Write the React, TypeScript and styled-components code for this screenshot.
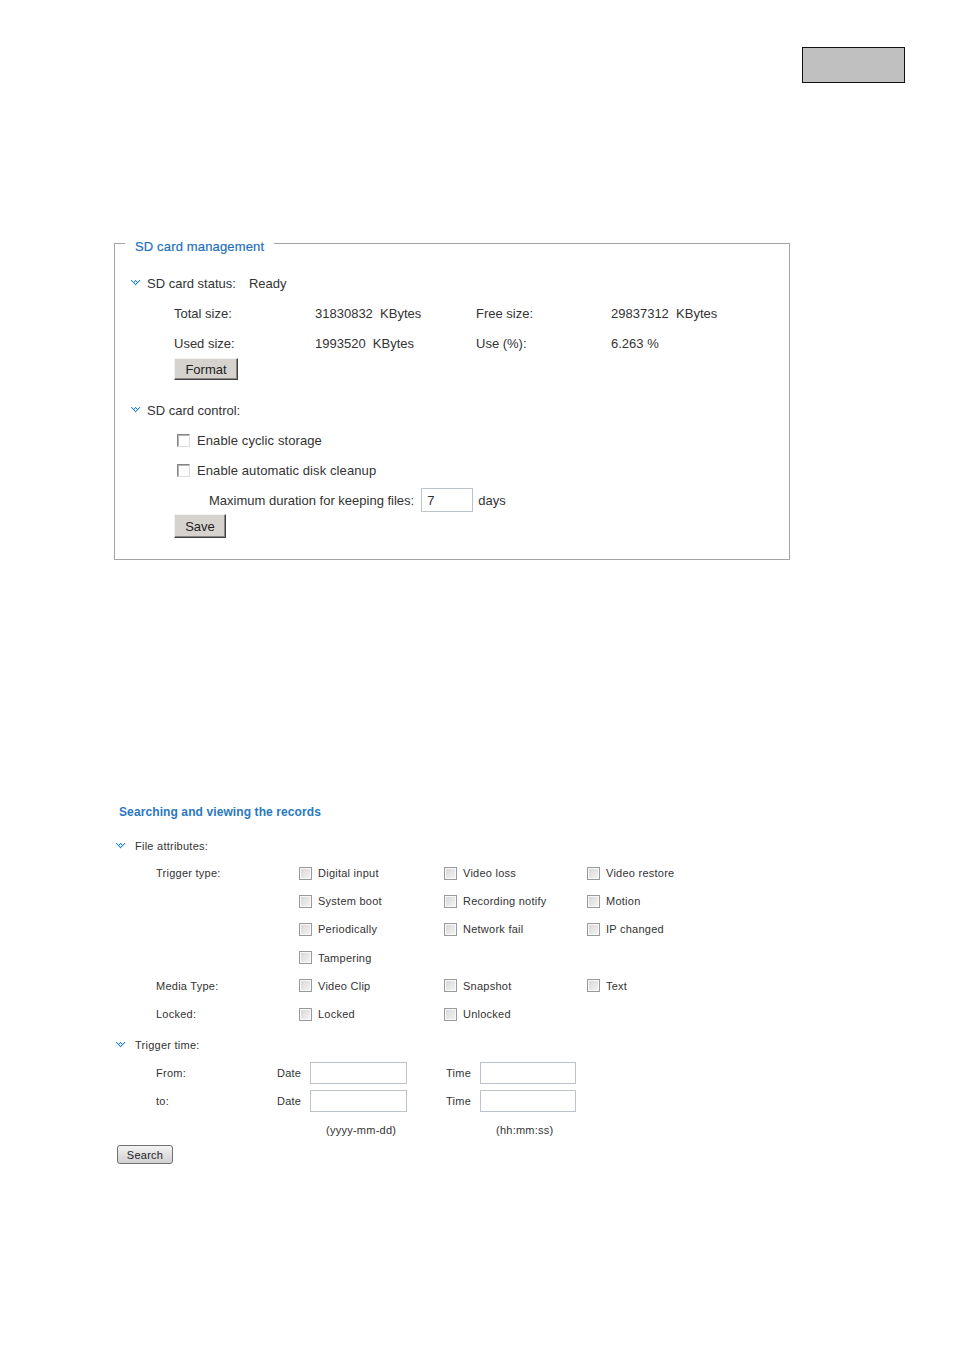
import React from "react";
import styled, { createGlobalStyle } from "styled-components";

const Global = createGlobalStyle`
  html, body { margin: 0; padding: 0; background: #fff; }
  body { font-family: "Liberation Sans", Arial, sans-serif; color: #333; }
  * { box-sizing: border-box; }
`;

const Page = styled.div`
  width: 954px;
  min-height: 1350px;
  background: #fff;
`;

const TopBar = styled.div`
  display: flex;
  justify-content: flex-end;
  padding: 47px 49px 0 0;
`;

const GrayBox = styled.div`
  width: 103px;
  height: 36px;
  background: #c0c0c0;
  border: 1px solid #111;
`;

const Fieldset = styled.fieldset`
  margin: 149px 0 0 114px;
  padding: 0;
  width: 676px;
  min-width: 0;
  border: 1px solid #a4a4a4;
`;

const Legend = styled.legend`
  margin-left: 10px;
  padding: 8px 10px 0 10px;
  font-size: 13px;
  line-height: 14px;
  letter-spacing: 0.15px;
  color: #2470bd;
  -webkit-text-stroke: 0.2px #2470bd;
`;

const Body = styled.div`
  padding: 14px 0 21px 16px;
  font-size: 13px;
`;

const Head = styled.div<{ $h: number; $mt?: number; $gap: number }>`
  display: flex;
  align-items: center;
  height: ${(p) => p.$h}px;
  margin-top: ${(p) => p.$mt ?? 0}px;
  & > svg { margin-right: ${(p) => p.$gap}px; flex: none; }
`;

const StatusVal = styled.span`
  margin-left: 13px;
`;

const Indented = styled.div<{ $pl: number }>`
  padding-left: ${(p) => p.$pl}px;
`;

const InfoRow = styled.div`
  display: grid;
  grid-template-columns: 141px 161px 135px auto;
  align-items: center;
  height: 30px;
`;

const ClassicButton = styled.button<{ $w: number; $h: number }>`
  display: block;
  width: ${(p) => p.$w}px;
  height: ${(p) => p.$h}px;
  padding: 0;
  font-family: "Liberation Sans", Arial, sans-serif;
  font-size: 13px;
  color: #222;
  background: #d6d3ce;
  border-style: solid;
  border-width: 1px;
  border-color: #f4f3f1 #404040 #404040 #f4f3f1;
  box-shadow: inset -1px -1px 0 #888;
`;

const CheckRow = styled.div`
  display: flex;
  align-items: center;
  height: 30px;
  letter-spacing: 0.1px;
`;

const ClassicCheck = styled.span`
  display: inline-block;
  width: 13px;
  height: 13px;
  margin: 0 7px 0 3px;
  background: #fff;
  border-style: solid;
  border-width: 1px;
  border-color: #858585 #dcdcdc #dcdcdc #858585;
  box-shadow: inset 1px 1px 0 #b4b4b4;
`;

const MaxRow = styled.div`
  display: flex;
  align-items: center;
  height: 28px;
  margin-top: 1px;
  padding-left: 35px;
`;

const DaysInput = styled.div`
  width: 52px;
  height: 24px;
  margin: 0 5px 0 7px;
  padding-left: 5px;
  display: flex;
  align-items: center;
  border: 1px solid #bcc3cd;
  background: #fff;
  font-size: 13px;
`;

const Search = styled.div`
  margin: 245px 0 0 116px;
  font-size: 11px;
  letter-spacing: 0.25px;
`;

const Title = styled.div`
  margin-left: 3px;
  font-weight: bold;
  font-size: 12px;
  line-height: 14px;
  letter-spacing: 0.1px;
  color: #2a78c0;
`;

const AttrGrid = styled.div`
  display: grid;
  grid-template-columns: 143px 145px 143px auto;
  grid-auto-rows: 28.2px;
  align-items: center;
  padding-left: 40px;
  margin-top: 3px;
`;

const Opt = styled.label`
  display: flex;
  align-items: center;
`;

const SoftCheck = styled.span`
  display: inline-block;
  width: 13px;
  height: 13px;
  margin-right: 6px;
  border: 1px solid #9a9a9a;
  background: linear-gradient(135deg, #d6d6d6 0%, #ececec 70%, #f6f6f6 100%);
  box-shadow: inset 0 0 0 1px #f8f8f8;
`;

const TimeGrid = styled.div`
  display: grid;
  grid-template-columns: 121px 33px 97px 39px 34px 96px;
  grid-template-rows: 28px 28px 29px;
  align-items: center;
  padding-left: 40px;
  margin-top: 4px;
`;

const TextBox = styled.div`
  height: 22px;
  border: 1px solid #bcc3cd;
  background: #fff;
`;

const Hint = styled.span<{ $col: number }>`
  grid-column: ${(p) => p.$col} / span 1;
  padding-left: 16px;
  white-space: nowrap;
`;

const SearchButton = styled.button`
  display: block;
  margin: 1px 0 0 1px;
  width: 56px;
  height: 19px;
  padding: 0;
  font-family: "Liberation Sans", Arial, sans-serif;
  font-size: 11px;
  letter-spacing: 0.25px;
  color: #222;
  border: 1px solid #707070;
  border-radius: 3px;
  background: linear-gradient(#f4f4f4, #dedede 55%, #d2d2d2);
`;

const dots: [number, number][] = [
  [0, 0], [4, 0], [8, 0],
  [1, 1], [3, 1], [5, 1], [7, 1],
  [2, 2], [6, 2],
  [3, 3], [5, 3],
  [4, 4],
];

const Arrow: React.FC = () => (
  <svg width="10" height="6" viewBox="0 0 10 6" fill="#2f8ad6">
    {dots.map(([x, y], i) => (
      <rect key={i} x={x} y={y} width="1.2" height="1.2" />
    ))}
  </svg>
);

const Option: React.FC<{ label: string }> = ({ label }) => (
  <Opt>
    <SoftCheck />
    {label}
  </Opt>
);

const attrRows: [string, string[]][] = [
  ["Trigger type:", ["Digital input", "Video loss", "Video restore"]],
  ["", ["System boot", "Recording notify", "Motion"]],
  ["", ["Periodically", "Network fail", "IP changed"]],
  ["", ["Tampering"]],
  ["Media Type:", ["Video Clip", "Snapshot", "Text"]],
  ["Locked:", ["Locked", "Unlocked"]],
];

export default function App() {
  return (
    <Page>
      <Global />
      <TopBar>
        <GrayBox />
      </TopBar>

      <Fieldset>
        <Legend>SD card management</Legend>
        <Body>
          <Head $h={30} $gap={6}>
            <Arrow />
            <span>SD card status:</span>
            <StatusVal>Ready</StatusVal>
          </Head>
          <Indented $pl={43}>
            <InfoRow>
              <span>Total size:</span>
              <span>31830832&nbsp; KBytes</span>
              <span>Free size:</span>
              <span>29837312&nbsp; KBytes</span>
            </InfoRow>
            <InfoRow>
              <span>Used size:</span>
              <span>1993520&nbsp; KBytes</span>
              <span>Use (%):</span>
              <span>6.263 %</span>
            </InfoRow>
            <ClassicButton $w={64} $h={22}>Format</ClassicButton>
          </Indented>

          <Head $h={30} $mt={15} $gap={6}>
            <Arrow />
            <span>SD card control:</span>
          </Head>
          <Indented $pl={43}>
            <CheckRow>
              <ClassicCheck />
              Enable cyclic storage
            </CheckRow>
            <CheckRow>
              <ClassicCheck />
              Enable automatic disk cleanup
            </CheckRow>
            <MaxRow>
              Maximum duration for keeping files:
              <DaysInput>7</DaysInput>
              days
            </MaxRow>
            <ClassicButton $w={52} $h={24}>Save</ClassicButton>
          </Indented>
        </Body>
      </Fieldset>

      <Search>
        <Title>Searching and viewing the records</Title>
        <Head $h={20} $mt={17} $gap={9}>
          <Arrow />
          <span>File attributes:</span>
        </Head>
        <AttrGrid>
          {attrRows.map(([label, opts], i) => (
            <React.Fragment key={i}>
              <span>{label}</span>
              {[0, 1, 2].map((j) =>
                opts[j] ? <Option key={j} label={opts[j]} /> : <span key={j} />
              )}
            </React.Fragment>
          ))}
        </AttrGrid>
        <Head $h={20} $mt={7} $gap={9}>
          <Arrow />
          <span>Trigger time:</span>
        </Head>
        <TimeGrid>
          <span>From:</span>
          <span>Date</span>
          <TextBox />
          <span />
          <span>Time</span>
          <TextBox />
          <span>to:</span>
          <span>Date</span>
          <TextBox />
          <span />
          <span>Time</span>
          <TextBox />
          <Hint $col={3}>(yyyy-mm-dd)</Hint>
          <Hint $col={6}>(hh:mm:ss)</Hint>
        </TimeGrid>
        <SearchButton>Search</SearchButton>
      </Search>
    </Page>
  );
}
